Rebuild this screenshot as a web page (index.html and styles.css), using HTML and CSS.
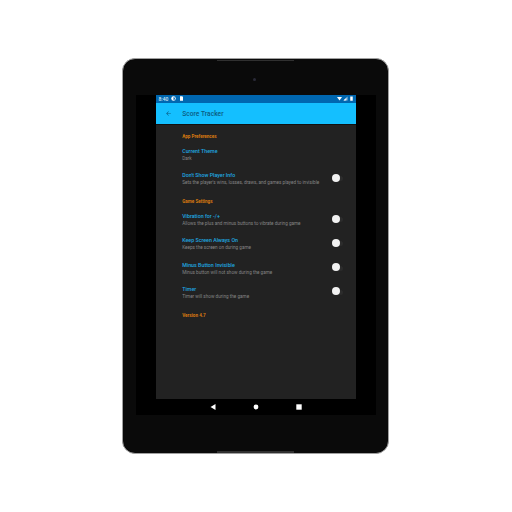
FILE: index.html
```html
<!DOCTYPE html>
<html lang="en">
<head>
<meta charset="utf-8">
<title>Score Tracker</title>
<link rel="stylesheet" href="styles.css">
</head>
<body>
<div class="device">
  <div class="speaker speaker-top"></div>
  <div class="camera"></div>
  <div class="screen">
    <div class="app">
      <div class="status">
        <div class="status-left">
          <span class="time">8:40</span>
          <svg class="si" viewBox="0 0 10 10"><circle cx="5" cy="5" r="4.500" fill="#fff"/><path d="M5 2a3 3 0 0 1 0 6z" fill="#0067b0"/></svg>
          <svg class="si" viewBox="0 0 10 10"><path d="M2 0.500h4.500L8 2V9.500H2z" fill="#fff"/></svg>
        </div>
        <div class="status-right">
          <svg class="si" viewBox="0 0 10 10"><path d="M0 2h10L5 9z" fill="#fff"/></svg>
          <svg class="si" viewBox="0 0 10 10"><path d="M9 1v8H1z" fill="#9cc3df"/><path d="M5.500 4.500v4.500H1z" fill="#fff"/></svg>
          <svg class="si" viewBox="0 0 10 10"><path d="M2.500 1h5v8.500h-5z" fill="#fff"/></svg>
        </div>
      </div>
      <div class="toolbar">
        <svg class="back" viewBox="0 0 24 24"><path d="M20 11H7.800l5.600-5.600L12 4l-8 8 8 8 1.400-1.400L7.800 13H20z" fill="#0b5a80"/></svg>
        <span class="app-title">Score Tracker</span>
      </div>
      <div class="prefs">
        <div class="section section-app">App Preferences</div>
        <div class="row row-theme">
          <div class="texts">
            <div class="name">Current Theme</div>
            <div class="desc">Dark</div>
          </div>
        </div>
        <div class="row">
          <div class="texts">
            <div class="name">Don't Show Player Info</div>
            <div class="desc">Sets the player's wins, losses, draws, and games played to invisible</div>
          </div>
          <div class="switch"><span class="knob"></span></div>
        </div>
        <div class="section section-game">Game Settings</div>
        <div class="row">
          <div class="texts">
            <div class="name">Vibration for -/+</div>
            <div class="desc">Allows the plus and minus buttons to vibrate during game</div>
          </div>
          <div class="switch"><span class="knob"></span></div>
        </div>
        <div class="row">
          <div class="texts">
            <div class="name">Keep Screen Always On</div>
            <div class="desc">Keeps the screen on during game</div>
          </div>
          <div class="switch"><span class="knob"></span></div>
        </div>
        <div class="row">
          <div class="texts">
            <div class="name">Minus Button Invisible</div>
            <div class="desc">Minus button will not show during the game</div>
          </div>
          <div class="switch"><span class="knob"></span></div>
        </div>
        <div class="row">
          <div class="texts">
            <div class="name">Timer</div>
            <div class="desc">Timer will show during the game</div>
          </div>
          <div class="switch"><span class="knob"></span></div>
        </div>
        <div class="section section-version">Version 4.7</div>
      </div>
    </div>
    <div class="nav">
      <svg class="nav-icon" viewBox="0 0 6 6"><path d="M5.500 0v6L0.500 3z" fill="#fff"/></svg>
      <svg class="nav-icon" viewBox="0 0 6 6"><circle cx="3" cy="3" r="2.400" fill="#fff"/></svg>
      <svg class="nav-icon" viewBox="0 0 6 6"><path d="M0.300 0.300h5.400v5.400H0.300z" fill="#fff"/></svg>
    </div>
  </div>
  <div class="speaker speaker-bottom"></div>
</div>
</body>
</html>
```

FILE: styles.css
```css
html, body {
  margin: 0;
  padding: 0;
  width: 512px;
  height: 512px;
  background: #fff;
  overflow: hidden;
  font-family: Roboto, "Liberation Sans", sans-serif;
}
body {
  display: flex;
  justify-content: center;
  align-items: flex-start;
  padding: 57.500px 0.600px 0 0;
  box-sizing: border-box;
}
.device {
  position: relative;
  box-sizing: border-box;
  width: 267px;
  height: 396.500px;
  background: #0a0a0a;
  border: 1.500px solid #a0a0a0;
  border-radius: 13px;
  padding-top: 36.300px;
  display: flex;
  justify-content: center;
  align-items: flex-start;
}
.speaker {
  position: absolute;
  left: 93.500px;
  width: 77px;
  height: 1.500px;
  background: #303030;
}
.speaker-top { top: 1px; }
.speaker-bottom { bottom: 0.500px; }
.camera {
  position: absolute;
  top: 19.500px;
  left: 129.500px;
  width: 3px;
  height: 3px;
  border-radius: 50%;
  background: #2a2a38;
}
.screen {
  width: 240px;
  height: 320px;
  background: #000;
  display: flex;
  flex-direction: column;
  align-items: center;
}
.app {
  width: 200.400px;
  height: 304px;
  background: #222;
  display: flex;
  flex-direction: column;
}
.status {
  height: 8px;
  background: #0067b0;
  display: flex;
  justify-content: space-between;
  align-items: center;
  padding: 0 2px 0 3px;
}
.status-left, .status-right { display: flex; align-items: center; gap: 1px; }
.status-left { gap: 3px; }
.time { font-size: 5px; line-height: 8px; color: #d6e6f2; font-weight: 500; }
.si { width: 5px; height: 5px; display: block; }
.toolbar {
  height: 21.500px;
  background: #14bfff;
  border-bottom: 1px solid #111;
  display: flex;
  align-items: center;
  padding-left: 9px;
  flex: none;
}
.back { width: 7px; height: 7px; margin-right: 10.700px; }
.app-title { font-size: 6.600px; color: #0b5a80; font-weight: 500; letter-spacing: 0.050px; }
.prefs {
  padding: 0 12.500px 0 26.700px;
  display: flex;
  flex-direction: column;
}
.section {
  font-size: 4.600px;
  line-height: 8px;
  font-weight: 700;
  color: #d97a10;
}
.section-app { margin-top: 7.500px; }
.section-game { margin: 11px 0 -2px; }
.section-version { margin-top: 11.500px; }
.row {
  display: flex;
  justify-content: space-between;
  align-items: center;
  margin-top: 8px;
  height: 16.200px;
}
.row-theme { margin-top: 5.500px; }
.name {
  font-size: 5.300px;
  line-height: 8px;
  font-weight: 500;
  color: #1fa8e0;
}
.desc {
  font-size: 4.650px;
  line-height: 7px;
  color: #858585;
}
.switch {
  width: 11px;
  height: 5px;
  border-radius: 3px;
  background: #2c2c2c;
  display: flex;
  align-items: center;
  position: relative;
}
.knob {
  position: absolute;
  left: 0;
  top: -2.500px;
  width: 8px;
  height: 8px;
  border-radius: 50%;
  background: #f2f2f2;
}
.nav {
  height: 16px;
  width: 100%;
  display: flex;
  justify-content: center;
  align-items: center;
  gap: 37px;
}
.nav-icon { width: 6px; height: 6px; display: block; }
```
